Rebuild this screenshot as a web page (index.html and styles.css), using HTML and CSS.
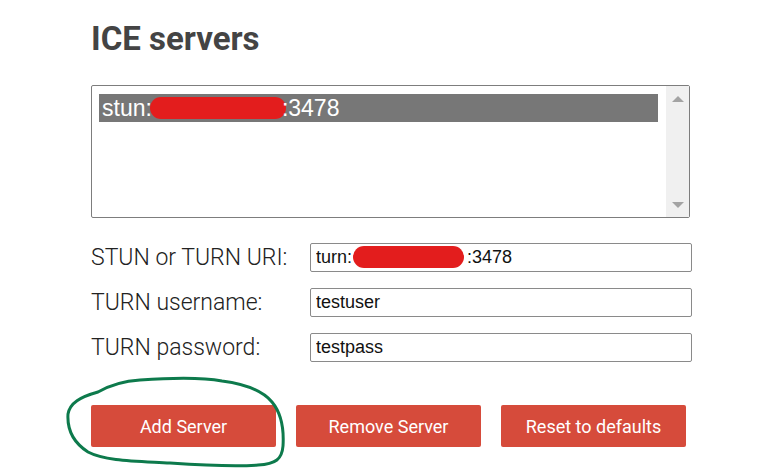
FILE: index.html
```html
<!DOCTYPE html>
<html lang="en">
<head>
  <meta charset="UTF-8">
  <title>ICE servers</title>
  <link rel="stylesheet" href="styles.css">
</head>
<body>
  <div class="page">
    <h1 class="title">ICE servers</h1>

    <div class="listbox">
      <div class="list-items">
        <div class="list-item selected">stun:<span class="redact list-redact"></span>:3478</div>
      </div>
      <div class="scrollbar">
        <span class="arrow up"></span>
        <span class="arrow down"></span>
      </div>
    </div>

    <div class="fields">
      <div class="field-row">
        <label class="field-label" for="uri">STUN or TURN URI:</label>
        <div class="input-wrap">
          <input class="field-input" id="uri" type="text" value="turn:                       :3478">
          <span class="redact input-redact"></span>
        </div>
      </div>
      <div class="field-row">
        <label class="field-label" for="username">TURN username:</label>
        <input class="field-input" id="username" type="text" value="testuser">
      </div>
      <div class="field-row">
        <label class="field-label" for="password">TURN password:</label>
        <input class="field-input" id="password" type="text" value="testpass">
      </div>
    </div>

    <div class="buttons">
      <button class="btn">Add Server</button>
      <button class="btn">Remove Server</button>
      <button class="btn">Reset to defaults</button>
    </div>

    <!-- hand drawn mark round the first button -->
    <svg class="scribble" width="783" height="471" viewBox="0 0 783 471">
      <path d="M98 392 C112 384 124 381 140 380 C170 378 200 377 222 381 C245 384 262 390 272 402 C282 414 284 430 283 446 C282 459 276 464 258 465 C230 467 200 465 170 463 C135 461 105 461 88 452 C74 443 67 430 68 414 C70 403 80 397 98 392 Z"
            fill="none" stroke="#0d7a4c" stroke-width="3" stroke-linejoin="round"/>
    </svg>
  </div>
</body>
</html>
```

FILE: styles.css
```css
body {
  margin: 0;
  background: #fff;
  font-family: Roboto, "Liberation Sans", Arial, sans-serif;
}

.page {
  position: relative;
  width: 783px;
  height: 471px;
  padding-left: 91px;
  box-sizing: border-box;
  overflow: hidden;
}

.title {
  margin: 0;
  padding-top: 19px;
  font-size: 33px;
  line-height: 40px;
  font-weight: bold;
  color: #444;
}

.listbox {
  display: flex;
  width: 599px;
  height: 133px;
  margin-top: 26px;
  border: 1px solid #7d7d7d;
  border-radius: 2px;
  box-sizing: border-box;
}

.list-items {
  flex: 1;
  padding: 8px 8px 8px 7px;
}

.list-item {
  height: 28px;
  font-family: "Liberation Sans", Arial, sans-serif;
  font-size: 23px;
  line-height: 28px;
  padding-left: 3px;
  white-space: nowrap;
}

.list-item.selected {
  background: #777;
  color: #fff;
}

.redact {
  display: inline-block;
  background: #e31d1d;
  border-radius: 11px;
}

.list-redact {
  width: 136px;
  height: 22px;
  vertical-align: -3px;
  margin-left: -2px;
  margin-right: -4px;
}

.scrollbar {
  width: 23px;
  background: #f0f0f0;
  display: flex;
  flex-direction: column;
  justify-content: space-between;
  align-items: center;
  padding: 10px 0 9px;
}

.arrow {
  width: 0;
  height: 0;
  border-left: 6px solid transparent;
  border-right: 6px solid transparent;
}

.arrow.up {
  border-bottom: 6px solid #a3a3a3;
}

.arrow.down {
  border-top: 6px solid #a3a3a3;
}

.fields {
  display: flex;
  flex-direction: column;
  gap: 17px;
  margin-top: 25px;
}

.field-row {
  display: flex;
  align-items: center;
  height: 28px;
}

.field-label {
  width: 219px;
  font-size: 23px;
  font-weight: 300;
  color: #222;
}

.input-wrap {
  position: relative;
}

.field-input {
  width: 382px;
  height: 29px;
  box-sizing: border-box;
  border: 1px solid #8a8a8a;
  border-radius: 2px;
  padding: 0 5px;
  font-family: "Liberation Sans", Arial, sans-serif;
  font-size: 18px;
  color: #111;
  outline: none;
}

.input-redact {
  position: absolute;
  left: 43px;
  top: 3px;
  width: 111px;
  height: 22px;
}

.buttons {
  display: flex;
  gap: 20px;
  margin-top: 44px;
}

.btn {
  width: 185px;
  height: 42px;
  border: none;
  border-radius: 2px;
  background: #d64b3b;
  color: #fff;
  font-family: Roboto, sans-serif;
  font-size: 18px;
  cursor: pointer;
}

.scribble {
  position: absolute;
  left: 0;
  top: 0;
  pointer-events: none;
}
```
